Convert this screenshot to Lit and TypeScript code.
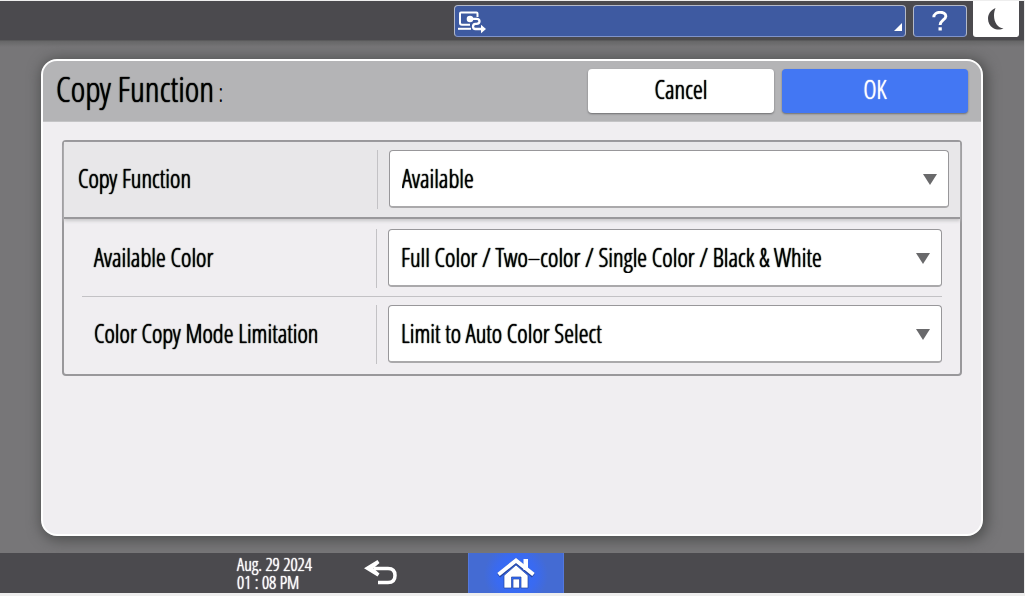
import { LitElement, html, css } from "lit";
import { customElement, property } from "lit/decorators.js";

@customElement("top-bar")
export class TopBar extends LitElement {
  static styles = css`
    :host {
      display: flex;
      justify-content: flex-end;
      height: 40px;
      padding-right: 5px;
      box-sizing: border-box;
      background: #4b4a4e;
      border-bottom: 1px solid #5a5a5b;
    }
    button {
      box-sizing: border-box;
      padding: 0;
      font: inherit;
      color: #fff;
      cursor: pointer;
    }
    .status,
    .help {
      margin-top: 4px;
      height: 32px;
      border: 1px solid #b4b9c8;
      border-bottom-color: #8094cb;
      border-radius: 4px;
      background: #3e5aa1;
    }
    .status {
      display: flex;
      align-items: flex-end;
      justify-content: space-between;
      flex: 0 1 452px;
      padding: 0 3px 5px 3px;
      margin-right: 7px;
    }
    .help {
      display: grid;
      place-items: center;
      width: 54px;
      margin-right: 6px;
    }
    .sleep {
      display: grid;
      place-items: center;
      width: 46px;
      height: 36px;
      border: 0;
      border-radius: 0 0 3px 3px;
      background: #fff;
    }
    svg {
      display: block;
    }
    .job {
      margin-bottom: -3px;
    }
  `;
  render() {
    return html`
      <button class="status" aria-label="Status">
        <svg class="job" width="28" height="24" viewBox="0 0 28 24" fill="none" stroke="#fff" stroke-width="2">
          <path d="M19.500 7V3.500Q19.500 2.500 18.500 2.500H3Q2 2.500 2 3.500V13Q2 14.800 4 14.800H12" />
          <path d="M0 18.800H13" />
          <circle cx="12" cy="9" r="3.300" fill="#fff" stroke="none" />
          <path d="M12 8.800H18.500Q21.500 8.800 21.500 11.300Q21.500 13.800 18.500 13.800H17.500Q15 14 15 16.500Q15 19 17.500 19H23" stroke-width="2.300" />
          <path d="M23 14.800L28 19L23 23.200Z" fill="#fff" stroke="none" />
        </svg>
        <svg width="8" height="8" viewBox="0 0 8 8"><path d="M8 0V8H0Z" fill="#fff" /></svg>
      </button>
      <button class="help" aria-label="Help">
        <svg width="16" height="20" viewBox="0 0 16 20" fill="none" stroke="#fff" stroke-width="2.900">
          <path d="M1.800 6.200C1.800 -0.200 14.200 -0.200 13.800 5.300C13.600 8.900 8.300 9.200 8.100 14" />
          <path d="M6.500 16.300H9.800V19.500H6.500Z" fill="#fff" stroke="none" />
        </svg>
      </button>
      <button class="sleep" aria-label="Sleep">
        <svg width="16" height="22" viewBox="0 0 16 22">
          <path d="M7.500 0C-2 4 -2 15.500 5 20C8.500 22.200 13 22 15.500 20.300C8 20 3.500 10 7.500 0Z" fill="#454448" />
        </svg>
      </button>
    `;
  }
}

@customElement("setting-row")
export class SettingRow extends LitElement {
  @property() label = "";
  @property({ attribute: false }) options: string[] = [];

  static styles = css`
    :host {
      display: grid;
      grid-template-columns: 35% 1fr;
      align-items: start;
    }
    label {
      display: flex;
      align-items: center;
      box-sizing: border-box;
      height: 59px;
      padding-left: var(--label-indent, 14px);
      padding-bottom: 4px;
      border-right: 1px solid #c3c2c5;
      white-space: nowrap;
    }
    .field {
      display: grid;
      align-items: center;
      margin-left: 11px;
    }
    select,
    .arrow {
      grid-area: 1 / 1;
    }
    select {
      appearance: none;
      box-sizing: border-box;
      width: 100%;
      height: 58px;
      padding: 0 40px 1px 12px;
      border: 1px solid #98979a;
      border-bottom: 2px solid #aaa9ab;
      border-radius: 4px;
      background: #fff;
      color: #000;
      font: inherit;
      text-shadow: inherit;
    }
    .arrow {
      justify-self: end;
      margin-right: 12px;
      pointer-events: none;
    }
  `;
  render() {
    return html`
      <label for="value">${this.label}</label>
      <div class="field">
        <select id="value">
          ${this.options.map((o) => html`<option>${o}</option>`)}
        </select>
        <svg class="arrow" width="14" height="11" viewBox="0 0 14 11"><path d="M0 0H14L7 11Z" fill="#69696b" /></svg>
      </div>
    `;
  }
}

@customElement("bottom-bar")
export class BottomBar extends LitElement {
  static styles = css`
    :host {
      display: grid;
      grid-template-columns: 468fr 96px 460fr;
      height: 40px;
      background: #4b4a4e;
      color: #fff;
    }
    .left {
      display: flex;
      align-items: center;
      justify-content: flex-end;
      gap: 52px;
      padding-right: 71px;
    }
    time {
      font-size: 18px;
      line-height: 18px;
      white-space: nowrap;
    }
    button {
      padding: 0;
      border: 0;
      background: none;
      cursor: pointer;
    }
    .home {
      display: grid;
      justify-items: center;
      align-items: end;
      box-sizing: border-box;
      padding-bottom: 4px;
      border: 1px solid #5478dc;
      border-width: 0 1px;
      background: radial-gradient(circle at 50% 55%, #2f6dff 0, #3a6af0 20px, #446bd3 32px);
    }
    svg {
      display: block;
    }
  `;
  render() {
    return html`
      <div class="left">
        <time datetime="2024-08-29T13:08">Aug. 29 2024<br />01 : 08 PM</time>
        <button aria-label="Back">
          <svg width="33" height="26" viewBox="0 0 33 26">
            <path d="M10 8.500H24Q31 8.500 31 15.500Q31 22.500 24 22.500H14" fill="none" stroke="#fff" stroke-width="3.500" />
            <path d="M0 8.200L13.500 0L15.500 3L9.500 8.200L15.500 13.500L13.500 16.500Z" fill="#fff" />
          </svg>
        </button>
      </div>
      <button class="home" aria-label="Home">
        <svg width="38" height="31" viewBox="0 0 38 31">
          <path d="M7 17.500L19 7L31 17.500V30H24V19H14.500V30H7Z M16 21H22.500V30H16Z" fill="#fff" stroke="#27459f" stroke-width="0.700" />
          <path d="M1.500 17.500L19 3L36.500 17.500" fill="none" stroke="#27459f" stroke-width="5" />
          <path d="M26.500 1H31V12H26.500Z" fill="#fff" />
          <path d="M1.500 16.500L19 2.500L36.500 16.500" fill="none" stroke="#fff" stroke-width="4" />
        </svg>
      </button>
    `;
  }
}

@customElement("app-root")
export class AppRoot extends LitElement {
  static styles = css`
    :host {
      display: flex;
      flex-direction: column;
      box-sizing: border-box;
      min-height: 100vh;
      padding: 1px 1px 3px 0;
      background: #eee;
      font: 25px/32px "Open Sans Condensed Light", "Roboto Condensed", "Open Sans", sans-serif;
      color: #000;
      text-shadow: 0 0 1px currentColor, 0 0 1px currentColor;
    }
    main {
      display: flex;
      flex: 1;
      padding: 18px 41px 17px;
      background: linear-gradient(#666667 0, #777678 6px, #777678);
    }
    .dialog {
      flex: 1;
      box-sizing: border-box;
      border: 2px solid #fff;
      border-radius: 16px;
      overflow: hidden;
      background: #f0eef1;
      box-shadow: 2px 2px 14px 2px #4c4d4d;
    }
    header {
      display: flex;
      gap: 8px;
      height: 61px;
      padding: 8px 13px 0;
      box-sizing: border-box;
      border-bottom: 1px solid #c4c4c6;
      background: #b4b4b6;
    }
    h1 {
      flex: 1;
      margin: 0;
      font-size: 35px;
      line-height: 40px;
      font-weight: inherit;
      white-space: nowrap;
    }
    .colon {
      margin-left: 4px;
      font-size: 25px;
      text-shadow: none;
    }
    header button {
      box-sizing: border-box;
      flex: 0 1 186px;
      height: 44px;
      padding: 0 0 4px;
      border: 0;
      border-radius: 4px;
      font: inherit;
      text-shadow: inherit;
      box-shadow: 0 1px 2px #6e6e70;
      cursor: pointer;
    }
    .cancel {
      background: #fff;
      color: #000;
    }
    .ok {
      background: #4377f3;
      color: #fff;
    }
    .settings {
      margin: 18px 19px;
      border: 2px solid #99989b;
      border-radius: 4px;
    }
    .primary {
      padding: 8px 11px 8px 0;
      background: #e8e7e9;
      border-bottom: 2px solid #99989b;
      box-shadow: 0 2px 3px #c9c8ca;
    }
    .nested {
      padding: 2px 18px;
    }
    .nested setting-row {
      --label-indent: 12px;
      grid-template-columns: 295px 1fr;
      padding: 8px 0;
    }
    .primary setting-row {
      grid-template-columns: 314px 1fr;
    }
    .nested setting-row + setting-row {
      border-top: 1px solid #c3c2c5;
    }
  `;
  render() {
    return html`
      <top-bar></top-bar>
      <main>
        <section class="dialog">
          <header>
            <h1>Copy Function<span class="colon">:</span></h1>
            <button class="cancel">Cancel</button>
            <button class="ok">OK</button>
          </header>
          <div class="settings">
            <div class="primary">
              <setting-row label="Copy Function" .options=${["Available"]}></setting-row>
            </div>
            <div class="nested">
              <setting-row
                label="Available Color"
                .options=${["Full Color / Two\u2013color / Single Color / Black & White"]}
              ></setting-row>
              <setting-row label="Color Copy Mode Limitation" .options=${["Limit to Auto Color Select"]}></setting-row>
            </div>
          </div>
        </section>
      </main>
      <bottom-bar></bottom-bar>
    `;
  }
}
